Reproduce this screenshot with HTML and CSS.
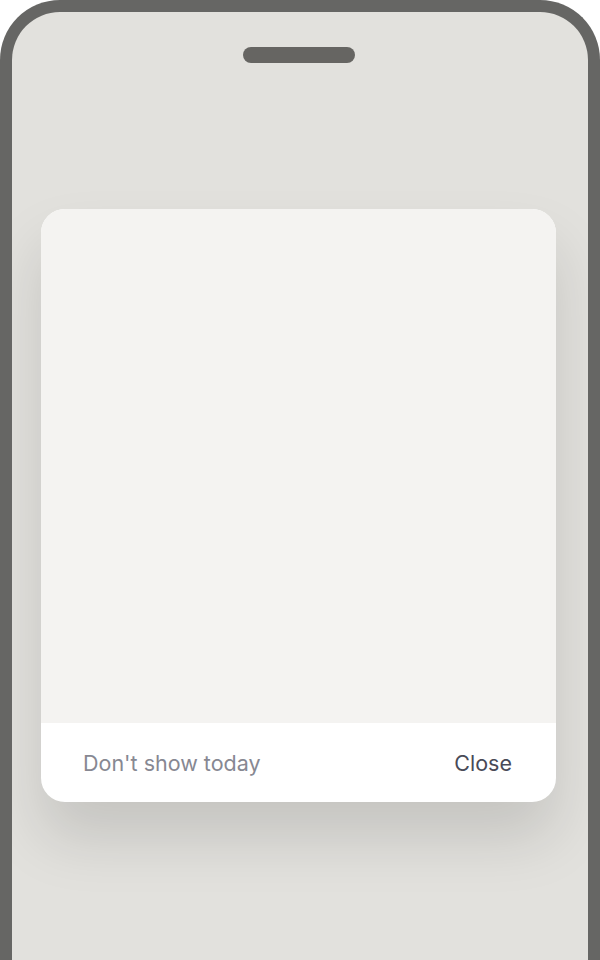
FILE: index.html
```html
<!DOCTYPE html>
<html>
<head>
<meta charset="utf-8">
<link rel="stylesheet" href="styles.css">
</head>
<body>
<div class="device">
  <div class="notch"></div>
  <div class="popup">
    <div class="popup-body"></div>
    <div class="popup-footer">
      <span class="dismiss">Don't show today</span>
      <span class="close">Close</span>
    </div>
  </div>
</div>
</body>
</html>
```
FILE: styles.css
```css
html, body {
  margin: 0;
  padding: 0;
  background: #ffffff;
}
.device {
  box-sizing: border-box;
  width: 600px;
  height: 1000px;
  border: 12px solid #666664;
  border-bottom: none;
  border-radius: 60px 60px 0 0;
  background: #e2e1dd;
  display: flex;
  flex-direction: column;
  overflow: hidden;
}
.notch {
  align-self: center;
  width: 112px;
  height: 16px;
  margin-top: 35px;
  margin-left: -2px;
  border-radius: 8px;
  background: #666562;
}
.popup {
  width: 515px;
  margin-top: 146px;
  margin-left: 29px;
  border-radius: 24px;
  overflow: hidden;
  background: #ffffff;
  box-shadow: 0 36px 60px rgba(0, 0, 0, 0.13);
  display: flex;
  flex-direction: column;
}
.popup-body {
  height: 514px;
  background: #f4f3f1;
}
.popup-footer {
  height: 79px;
  display: flex;
  align-items: center;
  justify-content: space-between;
  padding: 0 44px 0 42px;
  font-family: Inter, "Noto Sans", sans-serif;
  font-size: 21.5px;
}
.dismiss {
  color: #878892;
}
.close {
  color: #494a57;
}
```
